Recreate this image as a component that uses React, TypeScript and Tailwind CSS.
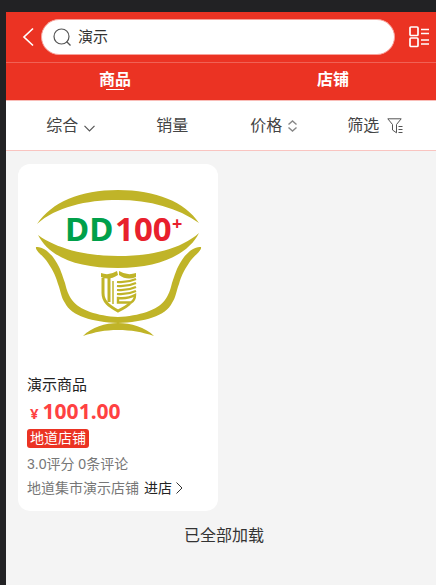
import React from "react";

interface Product {
  id: number;
  name: string;
  price: string;
  tag: string;
  score: string;
  comments: number;
  store: string;
}

const products: Product[] = [
  {
    id: 1,
    name: "演示商品",
    price: "1001.00",
    tag: "地道店铺",
    score: "3.0",
    comments: 0,
    store: "地道集市演示店铺",
  },
];

// Bowl shaped brand logo
function ProductLogo() {
  return (
    <svg viewBox="0 0 200 200" className="block w-full" role="img" aria-label="DD100+">
      <g fill="#c0b428">
        <path d="M19 60C34 38 62 26 100 26S167 38 181 59C160 44 132 36 100 36S38 43 19 60Z" />
        <path d="M20 71C38 84 66 92 100 92S163 85 181 69C170 91 140 104 100 104S32 94 20 71Z" />
        <path d="M18 83C24 82 32 88 37 96C43 105 44 111 47 119C49 127 50 130 54 136C61 146 80 152 100 153C121 152 140 146 147 136C151 130 152 127 154 119C157 111 158 105 164 96C169 88 177 82 183 83C184 87 175 92 171 99C165 108 163 113 161 120C158 128 158 133 154 139C148 152 126 158 100 159C75 158 53 152 47 139C43 133 43 128 40 120C38 113 36 108 30 99C26 92 17 87 18 83Z" />
        <path d="M65 172C74 163 87 159 100 159S127 163 136 172C124 168 113 166 100 166S77 168 65 172Z" />
        <path d="M83 109Q91 112 99 107L100 111Q91 117 83 113Z" />
        <path d="M101 107Q109 112 118 109V113Q109 117 101 111Z" />
      </g>
      <g fill="none" stroke="#c0b428" strokeWidth="3">
        <path d="M85 114V129C85 138 91 142 100 147C106 144 110 142 112 139" />
        <path d="M91 114V138" strokeWidth="3" />
        <path d="M95 117V140" strokeWidth="1.5" />
        <path d="M99 118Q109 119 118 115M99 122Q109 123 118 119M99 126Q109 127 118 123M99 130Q109 131 118 127" strokeWidth="2.2" />
        <path d="M100 134Q110 135 117 131Q117 136 113 138.500H100Z" strokeWidth="2.4" />
      </g>
      <g className="font-['Noto_Sans',sans-serif] font-bold" fontSize="33">
        <text x="47" y="77" fill="#00a04a">DD</text>
        <text x="97" y="77" fill="#e8202c">100</text>
        <text x="154" y="66" fontSize="18" fill="#e8202c">+</text>
      </g>
    </svg>
  );
}

function ProductCard({ product }: { product: Product }) {
  return (
    <div className="w-[200px] overflow-hidden rounded-xl bg-white">
      <ProductLogo />
      <div className="px-[9px] pt-[9px] pb-[11px] text-sm leading-6">
        <h3 className="text-[15px] leading-6 text-[#222]">{product.name}</h3>
        <p className="flex items-baseline gap-1 pl-[3px] font-['Noto_Sans',sans-serif] font-bold leading-7 text-[#ff4142]">
          <span className="text-[15px] leading-7">¥</span>
          <span className="text-[21px] leading-7">{product.price}</span>
        </p>
        <span className="mt-0.5 block w-fit rounded-[3px] bg-[#eb3323] px-[3px] leading-[19px] text-white">
          {product.tag}
        </span>
        <p className="mt-1 text-[#777]">
          {product.score}评分 {product.comments}条评论
        </p>
        <div className="flex items-center gap-[5px]">
          <span className="text-[#777]">{product.store}</span>
          <a href="#store" className="flex items-center gap-1 text-[#222]">
            进店
            <svg viewBox="0 0 7 12" className="h-3 w-[7px]" fill="none" stroke="#333">
              <path d="M0.5 0.5L6 6L0.5 11.5" />
            </svg>
          </a>
        </div>
      </div>
    </div>
  );
}

export default function App() {
  return (
    <div className="min-h-screen overflow-hidden bg-[#222224] pt-3 pl-1.5 font-['Liberation_Sans','Noto_Sans_CJK_SC',sans-serif]">
      {/* the page runs slightly past the right edge of the window */}
      <div className="-mr-1.5 flex min-h-[calc(100vh-12px)] flex-col bg-[#f4f4f4]">
        <header className="bg-[#eb3323]">
          <div className="flex h-[50px] items-center pr-[13px] pl-4">
            <button type="button" aria-label="返回" className="flex w-[19px]">
              <svg viewBox="0 0 12 20" className="h-5 w-3" fill="none" stroke="#fff" strokeWidth="1.7">
                <path d="M11 1.500L2 10L11 18.500" />
              </svg>
            </button>
            <label className="flex h-9 min-w-0 flex-1 items-center gap-[7px] rounded-full border border-[#f7a29b] bg-white px-[11px]">
              <svg viewBox="0 0 18 18" className="size-[18px] shrink-0" fill="none" stroke="#555" strokeWidth="1.2">
                <circle cx="8.5" cy="8.5" r="7.5" />
                <path d="M13.500 13.500L17.500 17.500" />
              </svg>
              <input
                type="text"
                aria-label="搜索"
                defaultValue="演示"
                className="min-w-0 flex-1 bg-transparent text-[15px] text-[#333] outline-none"
              />
            </label>
            <button type="button" aria-label="切换列表" className="ml-3.5 flex">
              <svg viewBox="0 0 20 22" className="h-[22px] w-5" fill="none" stroke="#fff" strokeWidth="1.7">
                <rect x="1" y="1" width="8" height="8.5" rx="1" />
                <rect x="1" y="12" width="8" height="8.5" rx="1" />
                <path d="M12 3.500H20M12 7.500H20M12 14H20M12 18H20" />
              </svg>
            </button>
          </div>
          <nav className="flex h-[39px] border-y border-t-[#f06255] border-b-[#f9bdb8] text-base font-bold text-white">
            <button type="button" className="flex flex-1 flex-col items-center pt-[5px]">
              <span className="leading-6">商品</span>
              <span className="-mt-[3px] h-px w-[18px] bg-white" />
            </button>
            <button type="button" className="flex flex-1 flex-col items-center pt-[5px]">
              <span className="leading-6">店铺</span>
            </button>
          </nav>
        </header>

        <div className="flex h-[50px] border-b border-[#f9c4c0] bg-white pr-4 pl-3.5 text-base text-[#444]">
          <button type="button" className="flex flex-1 items-center justify-center gap-1.5 pt-px">
            综合
            <svg viewBox="0 0 11 7" className="mt-1 h-[7px] w-[11px]" fill="none" stroke="#555" strokeWidth="1.2">
              <path d="M0.5 0.8L5.5 5.8L10.5 0.8" />
            </svg>
          </button>
          <button type="button" className="flex flex-1 items-center justify-center pt-px">
            销量
          </button>
          <button type="button" className="flex flex-1 items-center justify-center gap-1.5 pt-px">
            价格
            <svg viewBox="0 0 9 12" className="h-3 w-[9px]" fill="none" stroke="#888" strokeWidth="1.4">
              <path d="M0.5 4.5L4.5 1L8.5 4.5M0.5 7.5L4.5 11L8.5 7.5" />
            </svg>
          </button>
          <button type="button" className="flex flex-1 items-center justify-center gap-2 pt-px">
            筛选
            <svg viewBox="0 0 16 16" className="size-4" fill="none" stroke="#555">
              <path d="M0.8 0.8H14.200L9.5 6.500V14.800L5.5 12V6.500Z" />
              <path d="M11.5 8.5H15.5M11.5 11.5H15.5M11.5 14.5H15.5" />
            </svg>
          </button>
        </div>

        <main className="px-3 pt-[13px]">
          <div className="flex flex-wrap gap-3">
            {products.map((product) => (
              <ProductCard key={product.id} product={product} />
            ))}
          </div>
          <p className="mt-[13px] text-center text-base leading-6 text-[#333]">已全部加载</p>
        </main>
      </div>
    </div>
  );
}
